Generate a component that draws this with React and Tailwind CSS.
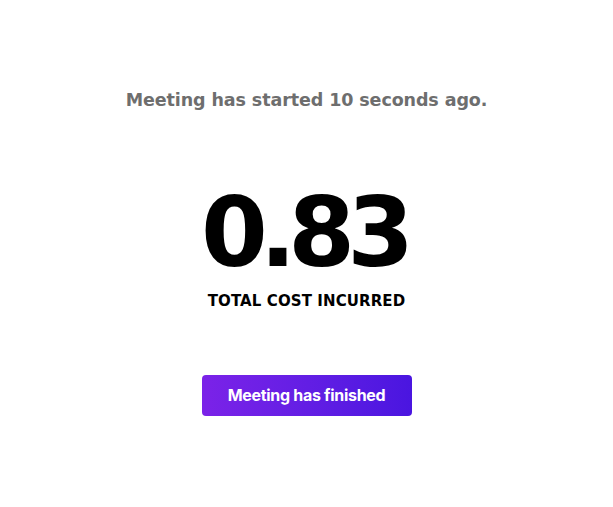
export default function App() {
  return (
    <div className="min-h-[507px] w-full bg-white flex flex-col items-center pt-[88px] font-['DejaVu_Sans',sans-serif]">
      <p className="text-[17.5px] font-bold text-[#6e6e6e] leading-6 tracking-[-0.1px]">
        Meeting has started 10 seconds ago.
      </p>
      <div className="mt-[71px] mr-[6px] text-[96px] font-bold leading-[100px] text-black tracking-[-8px]">
        0.83
      </div>
      <p className="mt-[7px] text-[15px] font-bold text-black tracking-[0.1px]">
        TOTAL COST INCURRED
      </p>
      <button
        type="button"
        className="mt-[62px] w-[210px] h-[41px] rounded bg-gradient-to-r from-[#7b22e8] to-[#4a15e0] text-white text-[16px] font-bold tracking-[-0.3px] font-['Inter',sans-serif]"
      >
        Meeting has finished
      </button>
    </div>
  );
}
